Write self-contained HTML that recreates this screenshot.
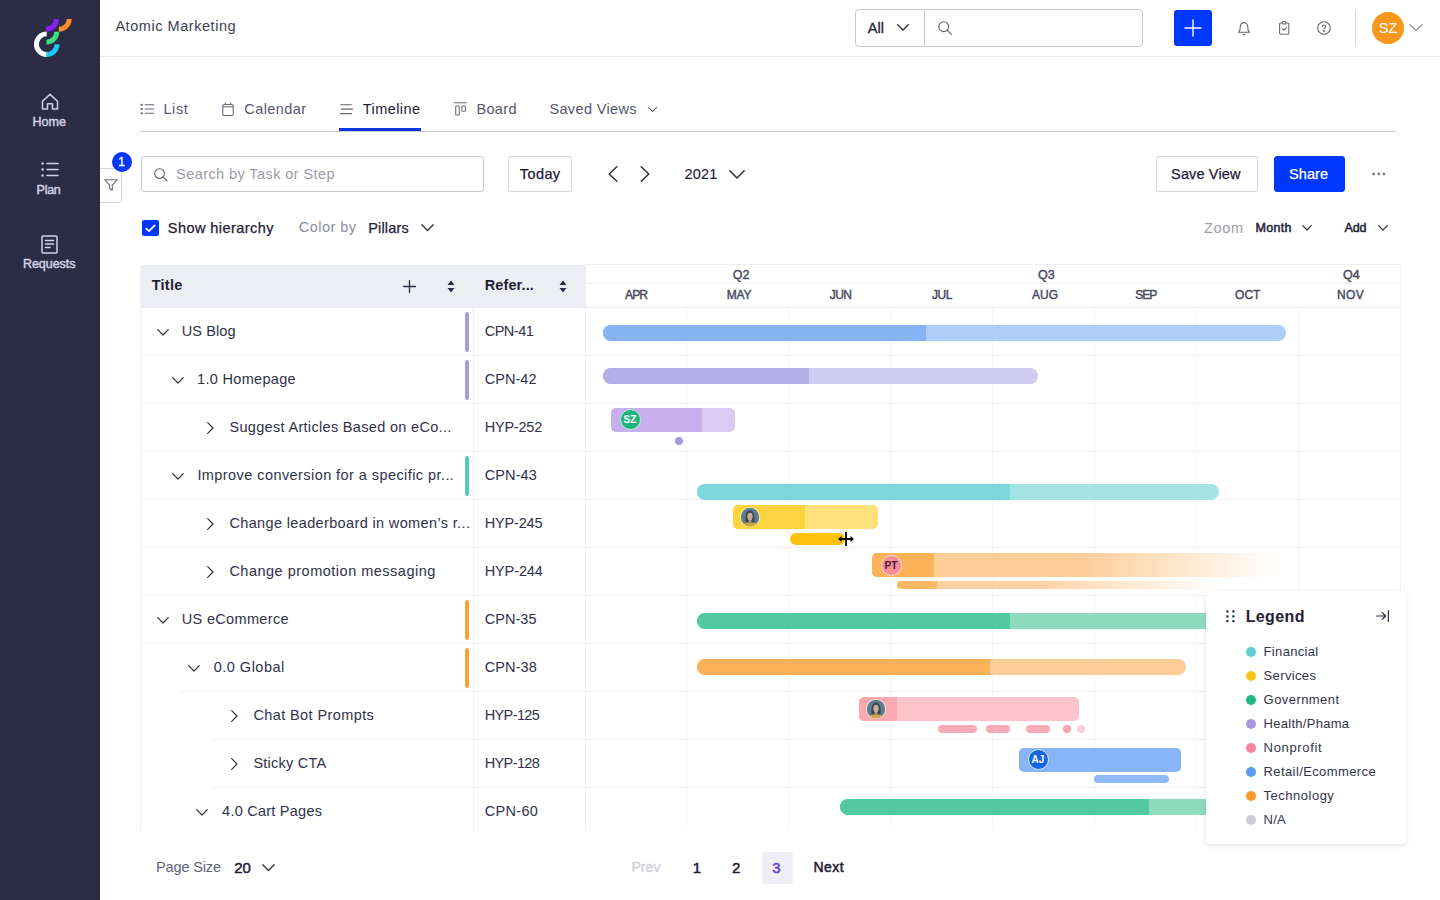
<!DOCTYPE html>
<html lang="en">
<head>
<meta charset="utf-8">
<title>Atomic Marketing - Timeline</title>
<style>
*{box-sizing:border-box;margin:0;padding:0}
html,body{width:1440px;height:900px;overflow:hidden;background:#fff}
body{font-family:"Liberation Sans",Arial,sans-serif;color:#1f2037;font-size:14px;position:relative}
.abs{position:absolute}
.t{position:absolute;white-space:nowrap;line-height:1}
svg{display:block;position:absolute;overflow:visible}
#side{position:absolute;left:0;top:0;width:100px;height:900px;background:#2c2c44}
#top{position:absolute;left:100px;top:0;width:1340px;height:57px;border-bottom:1px solid #ececf1;background:#fff}
#tabline{position:absolute;left:140px;top:131px;width:1256px;height:1px;background:#cbccd4}
#tabsel{position:absolute;left:338.500px;top:128px;width:82px;height:3px;background:#0c37e4}
.btn{position:absolute;height:36px;border:1px solid #d4d5dc;border-radius:3px;background:#fff}
#thead{position:absolute;left:140px;top:264.500px;width:445px;height:43px;background:#edeef4;border-radius:3px 0 0 0}
.hline{position:absolute;height:1px;background:#f0f0f4}
.vline{position:absolute;width:1px;background:#f6f6f9}
.pill{position:absolute;width:4px;height:40px;border-radius:2px;left:465px}
.bar{position:absolute;overflow:hidden}
.bar i{position:absolute;left:0;top:0;bottom:0;display:block}
.av{position:absolute;width:21px;height:21px;border-radius:50%;border:1.300px solid #fff;color:#fff;font-size:10px;font-weight:bold;line-height:19.500px;text-align:center}
#legend{position:absolute;left:1206px;top:591px;width:200px;height:253px;background:#fff;border-radius:4px;box-shadow:0 2px 5px rgba(40,40,70,.12),0 0 1px rgba(40,40,70,.09)}
.dot{position:absolute;width:10px;height:10px;border-radius:50%}
</style>
</head>
<body>

<div id="side">
<svg style="left:0;top:0" width="100" height="70" viewBox="0 0 100 70" fill="none" stroke-width="4.900"><path d="M46.700 33.9A10.3 10.3 0 0 0 46.700 54.5" stroke="#fff"/><path d="M46.7 54.5A10.3 10.3 0 0 0 57 44.2" stroke="#1cc8f0"/><path d="M46.5 42.1A10.3 10.3 0 0 0 56.8 31.8" stroke="#3be081"/><path d="M46.1 29.2A10.3 10.3 0 0 0 56.4 18.9" stroke="#8622f5"/><path d="M58.9 29.2A10.3 10.3 0 0 0 69.2 18.9" stroke="#ff8a2b"/></svg>
<svg style="left:41px;top:93px" width="18" height="18" viewBox="0 0 18 18" fill="none" stroke="#d2d2e6" stroke-width="1.500" stroke-linejoin="round" stroke-linecap="round"><path d="M1.500 8.200 9 1.400l7.500 6.800V16h-5v-5.200h-5V16h-5z"/></svg>
<svg style="left:41px;top:161px" width="18" height="17" viewBox="0 0 18 17" fill="none" stroke="#d2d2e6" stroke-width="1.500" stroke-linecap="round"><path d="M6 2.500h11M6 8.500h11M6 14.500h11"/><circle cx="1.600" cy="2.500" r="1.200" fill="#d2d2e6" stroke="none"/><circle cx="1.600" cy="8.500" r="1.200" fill="#d2d2e6" stroke="none"/><circle cx="1.600" cy="14.500" r="1.200" fill="#d2d2e6" stroke="none"/></svg>
<svg style="left:41px;top:235px" width="17" height="19" viewBox="0 0 17 19" fill="none" stroke="#d2d2e6" stroke-width="1.500" stroke-linejoin="round" stroke-linecap="round"><rect x="1" y="1" width="15" height="17" rx="1"/><path d="M4.500 5.500h8M4.500 9h8M4.500 12.500h4.500"/></svg>
<div class="t" style="left:32.4px;top:115.67px;font-size:12.5px;color:#d2d2e6;letter-spacing:0.09px;-webkit-text-stroke:0.45px #d2d2e6;">Home</div>
<div class="t" style="left:36.6px;top:183.68px;font-size:12.5px;color:#d2d2e6;letter-spacing:-0.28px;-webkit-text-stroke:0.45px #d2d2e6;">Plan</div>
<div class="t" style="left:22.9px;top:257.88px;font-size:12.5px;color:#d2d2e6;letter-spacing:-0.03px;-webkit-text-stroke:0.45px #d2d2e6;">Requests</div>
</div>
<div id="top"></div>
<div class="t" style="left:115.4px;top:18.89px;font-size:14.5px;color:#3d3e55;letter-spacing:0.55px;">Atomic Marketing</div>
<div class="abs" style="left:855px;top:9px;width:288px;height:38px;border:1px solid #c9cad2;border-radius:4px"></div>
<div class="abs" style="left:924px;top:10px;width:1px;height:36px;background:#c9cad2"></div>
<div class="t" style="left:867.8px;top:20.89px;font-size:14.5px;color:#1f2037;letter-spacing:0.04px;-webkit-text-stroke:0.3px #1f2037;">All</div>
<svg style="left:897px;top:24px" width="12" height="7" viewBox="0 0 12 7" fill="none" stroke="#2a2b40" stroke-width="1.300" stroke-linecap="round" stroke-linejoin="round"><path d="M.700.700 6 6 11.300.700"/></svg>
<svg style="left:938px;top:21px" width="14" height="14" viewBox="0 0 14 14" fill="none" stroke="#5d5e70" stroke-width="1.100" stroke-linecap="round"><circle cx="5.700" cy="5.700" r="4.900"/><path d="M9.300 9.300 13.300 13.300"/></svg>
<div class="abs" style="left:1174px;top:10px;width:38px;height:36px;background:#0037ff;border-radius:3px"></div>
<svg style="left:1185px;top:20px" width="16" height="16" viewBox="0 0 16 16" stroke="#fff" stroke-width="1.400" stroke-linecap="round"><path d="M8 0v16M0 8h16"/></svg>
<svg style="left:1238px;top:21.600px" width="12" height="13.500" viewBox="0 0 12 13.500" fill="none" stroke="#62636f" stroke-width="1.050" stroke-linecap="round" stroke-linejoin="round"><path d="M.600 10.200c1.200-.900 1.600-2 1.600-4.600C2.200 2.500 3.800.600 6 .600s3.800 1.900 3.800 5c0 2.600.400 3.700 1.600 4.600z"/><path d="M4.700 12.100c.300.500.800.700 1.300.7s1-.200 1.300-.7"/></svg>
<svg style="left:1278.900px;top:21.100px" width="10.400" height="13.800" viewBox="0 0 10.400 13.800" fill="none" stroke="#62636f" stroke-width="1.050" stroke-linecap="round" stroke-linejoin="round"><rect x=".600" y="2" width="9.200" height="11.200" rx="1"/><rect x="3.500" y=".500" width="3.400" height="2.400" rx=".700" fill="#fff"/><path d="M3.200 7.700l1.500 1.400 2.700-2.800"/></svg>
<svg style="left:1317px;top:20.900px" width="14" height="14" viewBox="0 0 14 14" fill="none" stroke="#62636f" stroke-width="1.050" stroke-linecap="round" stroke-linejoin="round"><circle cx="7" cy="7" r="6.350"/><path d="M5.200 5.600c0-1 .800-1.700 1.800-1.700s1.800.700 1.800 1.600c0 1.200-1.800 1.400-1.800 2.600"/><circle cx="7" cy="10" r=".450" fill="#62636f"/></svg>
<div class="abs" style="left:1355px;top:11px;width:1px;height:35px;background:#d9dae0"></div>
<div class="abs" style="left:1372px;top:12px;width:32px;height:32px;border-radius:50%;background:#f8981a"></div>
<div class="t" style="left:1378.73px;top:21.09px;font-size:14.5px;color:#fff;">SZ</div>
<svg style="left:1409px;top:24px" width="14" height="7" viewBox="0 0 14 7" fill="none" stroke="#8a8b9a" stroke-width="1.200" stroke-linecap="round" stroke-linejoin="round"><path d="M.700.600 7 6.300 13.300.600"/></svg>
<div id="tabline"></div><div id="tabsel"></div>
<div class="t" style="left:163.4px;top:101.69px;font-size:14.5px;color:#55566b;letter-spacing:0.64px;">List</div>
<div class="t" style="left:244.3px;top:101.69px;font-size:14.5px;color:#55566b;letter-spacing:0.42px;">Calendar</div>
<div class="t" style="left:362.7px;top:101.69px;font-size:14.5px;color:#1f2037;letter-spacing:0.45px;">Timeline</div>
<div class="t" style="left:476.4px;top:101.69px;font-size:14.5px;color:#55566b;letter-spacing:0.37px;">Board</div>
<div class="t" style="left:549.4px;top:101.69px;font-size:14.5px;color:#55566b;letter-spacing:0.36px;">Saved Views</div>
<svg style="left:140px;top:103px" width="15" height="12" viewBox="0 0 15 12" fill="none" stroke="#666778" stroke-width="1.100" stroke-linecap="round"><path d="M5.200 1.700h8.400M5.200 6h8.400M5.200 10.300h8.400"/><rect x=".700" y=".700" width="2.100" height="2.100" rx=".600" fill="#666778" stroke="none"/><rect x=".700" y="4.950" width="2.100" height="2.100" rx=".600" fill="#666778" stroke="none"/><rect x=".700" y="9.200" width="2.100" height="2.100" rx=".600" fill="#666778" stroke="none"/></svg>
<svg style="left:222.400px;top:102px" width="12" height="14" viewBox="0 0 12 14" fill="none" stroke="#666778" stroke-width="1.050" stroke-linecap="round" stroke-linejoin="round"><rect x=".800" y="2.400" width="10.400" height="11" rx="1.200"/><path d="M.800 4.800h10.400M3.300.700v1.700M8.700.700v1.700"/></svg>
<svg style="left:340px;top:104px" width="13" height="11" viewBox="0 0 13 11" fill="none" stroke="#666778" stroke-width="1.150" stroke-linecap="round"><path d="M.600.700h10.800M1.400 5.100h11.200M.600 9.600h10.800"/></svg>
<svg style="left:453px;top:101px" width="15" height="15" viewBox="0 0 15 15" fill="none" stroke="#666778" stroke-width="1.050" stroke-linecap="round" stroke-linejoin="round"><path d="M1.300 1.700h12.200"/><rect x="2.700" y="4.900" width="3.500" height="9.100" rx=".600"/><rect x="8.900" y="4.900" width="3.500" height="5.400" rx=".600"/></svg>
<svg style="left:648px;top:107px" width="9" height="5" viewBox="0 0 9 5" fill="none" stroke="#55566b" stroke-width="1.100" stroke-linecap="round" stroke-linejoin="round"><path d="M.600.600 4.500 4.300 8.400.600"/></svg>
<div class="abs" style="left:100px;top:168px;width:22px;height:35px;border:1px solid #d4d5dc;border-left:0;border-radius:0 3px 3px 0;background:#fff"></div>
<svg style="left:104px;top:179px" width="14" height="12" viewBox="0 0 14 12" fill="none" stroke="#6a6b7d" stroke-width="1.100" stroke-linejoin="round"><path d="M.800.700h12.400L8.300 6.300v4.900L5.700 9.700V6.300z"/></svg>
<div class="abs" style="left:111.500px;top:151.500px;width:20px;height:20px;border-radius:50%;background:#0037ff"></div>
<div class="t" style="left:118.3px;top:155.72px;font-size:12px;color:#fff;-webkit-text-stroke:0.35px #fff;">1</div>
<div class="abs" style="left:141px;top:156px;width:343px;height:36px;border:1px solid #c9cad2;border-radius:3px"></div>
<svg style="left:154px;top:168px" width="14" height="14" viewBox="0 0 14 14" fill="none" stroke="#62636f" stroke-width="1.100" stroke-linecap="round"><circle cx="5.600" cy="5.600" r="4.800"/><path d="M9.200 9.200 13 13"/></svg>
<div class="t" style="left:176.1px;top:166.9px;font-size:14.5px;color:#9b9ca8;letter-spacing:0.42px;">Search by Task or Step</div>
<div class="btn" style="left:508px;top:156px;width:64px"></div>
<div class="t" style="left:519.8px;top:167px;font-size:14.5px;color:#1f2037;letter-spacing:0.4px;-webkit-text-stroke:0.25px #1f2037;">Today</div>
<svg style="left:608px;top:166px" width="10" height="16" viewBox="0 0 10 16" fill="none" stroke="#2a2b40" stroke-width="1.500" stroke-linecap="round" stroke-linejoin="round"><path d="M8.800.800 1.200 8l7.600 7.200"/></svg>
<svg style="left:640px;top:166px" width="10" height="16" viewBox="0 0 10 16" fill="none" stroke="#2a2b40" stroke-width="1.500" stroke-linecap="round" stroke-linejoin="round"><path d="M1.200.800 8.800 8l-7.600 7.200"/></svg>
<div class="t" style="left:684.4px;top:167px;font-size:14.5px;color:#1f2037;letter-spacing:0.21px;-webkit-text-stroke:0.15px #1f2037;">2021</div>
<svg style="left:729px;top:170px" width="16" height="9" viewBox="0 0 16 9" fill="none" stroke="#2a2b40" stroke-width="1.500" stroke-linecap="round" stroke-linejoin="round"><path d="M.800.800 8 8l7.200-7.200"/></svg>
<div class="btn" style="left:1156px;top:156px;width:101.500px"></div>
<div class="t" style="left:1171.1px;top:166.7px;font-size:14.5px;color:#1f2037;letter-spacing:0.14px;-webkit-text-stroke:0.25px #1f2037;">Save View</div>
<div class="btn" style="left:1273.500px;top:156px;width:71px;background:#0037ff;border-color:#0037ff"></div>
<div class="t" style="left:1289px;top:166.7px;font-size:14.5px;color:#fff;letter-spacing:0.1px;-webkit-text-stroke:0.25px #fff;">Share</div>
<svg style="left:1372px;top:172px" width="14" height="4" viewBox="0 0 14 4"><circle cx="1.700" cy="2" r="1.400" fill="#7b7c8c"/><circle cx="6.800" cy="2" r="1.400" fill="#7b7c8c"/><circle cx="11.900" cy="2" r="1.400" fill="#7b7c8c"/></svg>
<div class="abs" style="left:142px;top:220px;width:17px;height:16px;border-radius:2px;background:#0037ff"></div>
<svg style="left:145px;top:224px" width="11" height="9" viewBox="0 0 11 9" fill="none" stroke="#fff" stroke-width="1.800" stroke-linecap="round" stroke-linejoin="round"><path d="M1.300 4.600 4 7.200 9.600 1.500"/></svg>
<div class="t" style="left:167.8px;top:220.7px;font-size:14.5px;color:#1f2037;letter-spacing:0.44px;-webkit-text-stroke:0.25px #1f2037;">Show hierarchy</div>
<div class="t" style="left:298.7px;top:220.09px;font-size:14.5px;color:#8d8e9b;letter-spacing:0.49px;">Color by</div>
<div class="t" style="left:368.2px;top:220.7px;font-size:14.5px;color:#1f2037;letter-spacing:0.17px;-webkit-text-stroke:0.25px #1f2037;">Pillars</div>
<svg style="left:421px;top:224px" width="13" height="8" viewBox="0 0 13 8" fill="none" stroke="#2a2b40" stroke-width="1.300" stroke-linecap="round" stroke-linejoin="round"><path d="M.800.800 6.500 6.500 12.200.800"/></svg>
<div class="t" style="left:1204px;top:220.59px;font-size:14.5px;color:#9b9ca8;letter-spacing:0.67px;">Zoom</div>
<div class="t" style="left:1255.4px;top:221.57px;font-size:12.5px;color:#1f2037;letter-spacing:0.36px;-webkit-text-stroke:0.5px #1f2037;">Month</div>
<svg style="left:1302px;top:225px" width="10" height="6" viewBox="0 0 10 6" fill="none" stroke="#2a2b40" stroke-width="1.200" stroke-linecap="round" stroke-linejoin="round"><path d="M.700.700 5 5 9.300.700"/></svg>
<div class="t" style="left:1344.6px;top:221.57px;font-size:12.5px;color:#1f2037;letter-spacing:-0.13px;-webkit-text-stroke:0.5px #1f2037;">Add</div>
<svg style="left:1378px;top:225px" width="10" height="6" viewBox="0 0 10 6" fill="none" stroke="#2a2b40" stroke-width="1.200" stroke-linecap="round" stroke-linejoin="round"><path d="M.700.700 5 5 9.300.700"/></svg>
<div id="thead"></div>
<div class="t" style="left:151.7px;top:278px;font-size:14.5px;color:#1f2037;font-weight:bold;letter-spacing:0.26px;">Title</div>
<svg style="left:403px;top:280px" width="13" height="13" viewBox="0 0 13 13" stroke="#2a2b40" stroke-width="1.300" stroke-linecap="round"><path d="M6.500.600v11.800M.600 6.500h11.800"/></svg>
<svg style="left:447px;top:280px" width="8" height="13" viewBox="0 0 8 13" fill="#2a2b40"><path d="M4 .500 7.500 5h-7zM4 12.500.500 8h7z"/></svg>
<div class="t" style="left:484.7px;top:278px;font-size:14.5px;color:#1f2037;font-weight:bold;letter-spacing:0.12px;">Refer...</div>
<svg style="left:559px;top:280px" width="8" height="13" viewBox="0 0 8 13" fill="#2a2b40"><path d="M4 .500 7.500 5h-7zM4 12.500.500 8h7z"/></svg>
<div class="hline" style="left:585px;top:264px;width:815px;background:#eeeef2"></div>
<div class="hline" style="left:585px;top:283px;width:815px;background:#f0f0f4"></div>
<div class="hline" style="left:585px;top:307px;width:815px;background:#eaeaef"></div>
<div class="t" style="left:625.05px;top:289.32px;font-size:12px;color:#4b4c5f;letter-spacing:-0.84px;-webkit-text-stroke:0.45px #4b4c5f;">APR</div>
<div class="t" style="left:726.65px;top:289.32px;font-size:12px;color:#4b4c5f;letter-spacing:-0.16px;-webkit-text-stroke:0.45px #4b4c5f;">MAY</div>
<div class="t" style="left:829.8px;top:289.32px;font-size:12px;color:#4b4c5f;letter-spacing:-0.62px;-webkit-text-stroke:0.45px #4b4c5f;">JUN</div>
<div class="t" style="left:932.1px;top:289.32px;font-size:12px;color:#4b4c5f;letter-spacing:-0.52px;-webkit-text-stroke:0.45px #4b4c5f;">JUL</div>
<div class="t" style="left:1032.1px;top:289.32px;font-size:12px;color:#4b4c5f;letter-spacing:-0.06px;-webkit-text-stroke:0.45px #4b4c5f;">AUG</div>
<div class="t" style="left:1135.35px;top:289.32px;font-size:12px;color:#4b4c5f;letter-spacing:-1.01px;-webkit-text-stroke:0.45px #4b4c5f;">SEP</div>
<div class="t" style="left:1235.1px;top:289.32px;font-size:12px;color:#4b4c5f;letter-spacing:-0.02px;-webkit-text-stroke:0.45px #4b4c5f;">OCT</div>
<div class="t" style="left:1337.05px;top:289.32px;font-size:12px;color:#4b4c5f;letter-spacing:0.29px;-webkit-text-stroke:0.45px #4b4c5f;">NOV</div>
<div class="t" style="left:732.66px;top:268.88px;font-size:12.5px;color:#4b4c5f;-webkit-text-stroke:0.45px #4b4c5f;">Q2</div>
<div class="t" style="left:1037.96px;top:268.88px;font-size:12.5px;color:#4b4c5f;-webkit-text-stroke:0.45px #4b4c5f;">Q3</div>
<div class="t" style="left:1342.96px;top:268.88px;font-size:12.5px;color:#4b4c5f;-webkit-text-stroke:0.45px #4b4c5f;">Q4</div>
<div class="vline" style="left:686.38px;top:308px;height:527px"></div>
<div class="vline" style="left:788.25px;top:308px;height:527px"></div>
<div class="vline" style="left:890.12px;top:308px;height:527px"></div>
<div class="vline" style="left:992px;top:308px;height:527px"></div>
<div class="vline" style="left:1093.88px;top:308px;height:527px"></div>
<div class="vline" style="left:1195.75px;top:308px;height:527px;background:#fafafc"></div>
<div class="vline" style="left:1297.62px;top:308px;height:527px"></div>
<div class="vline" style="left:585px;top:265px;height:570px;background:#efeff3"></div>
<div class="vline" style="left:1399.500px;top:265px;height:570px;background:#f1f1f5"></div>
<div class="vline" style="left:472.500px;top:308px;height:527px;background:#f0f0f4"></div>
<div class="vline" style="left:140px;top:308px;height:527px;background:#f0f0f4"></div>
<svg style="left:157px;top:329px" width="12" height="7" viewBox="0 0 12 7" fill="none" stroke="#30314a" stroke-width="1.200" stroke-linecap="round" stroke-linejoin="round"><path d="M.700.700 6 6 11.300.700"/></svg>
<div class="t" style="left:181.7px;top:324.19px;font-size:14.5px;color:#30314a;letter-spacing:0.12px;">US Blog</div>
<div class="t" style="left:484.7px;top:324.19px;font-size:14.5px;color:#30314a;letter-spacing:-0.48px;">CPN-41</div>
<div class="pill" style="top:312px;background:#a79bdc"></div>
<div class="hline" style="left:140px;top:355px;width:1260px"></div>
<svg style="left:172px;top:377px" width="12" height="7" viewBox="0 0 12 7" fill="none" stroke="#30314a" stroke-width="1.200" stroke-linecap="round" stroke-linejoin="round"><path d="M.700.700 6 6 11.300.700"/></svg>
<div class="t" style="left:197.1px;top:372.19px;font-size:14.5px;color:#30314a;letter-spacing:0.31px;">1.0 Homepage</div>
<div class="t" style="left:484.7px;top:372.19px;font-size:14.5px;color:#30314a;letter-spacing:0.06px;">CPN-42</div>
<div class="pill" style="top:360px;background:#a79bdc"></div>
<div class="hline" style="left:140px;top:403px;width:1260px"></div>
<svg style="left:206.5px;top:422px" width="7" height="12" viewBox="0 0 7 12" fill="none" stroke="#30314a" stroke-width="1.200" stroke-linecap="round" stroke-linejoin="round"><path d="M.700.700 6 6 .700 11.300"/></svg>
<div class="t" style="left:229.4px;top:420.19px;font-size:14.5px;color:#30314a;letter-spacing:0.32px;">Suggest Articles Based on eCo...</div>
<div class="t" style="left:484.7px;top:420.19px;font-size:14.5px;color:#30314a;letter-spacing:-0.21px;">HYP-252</div>
<div class="hline" style="left:140px;top:451px;width:1260px"></div>
<svg style="left:172px;top:473px" width="12" height="7" viewBox="0 0 12 7" fill="none" stroke="#30314a" stroke-width="1.200" stroke-linecap="round" stroke-linejoin="round"><path d="M.700.700 6 6 11.300.700"/></svg>
<div class="t" style="left:197.4px;top:468.19px;font-size:14.5px;color:#30314a;letter-spacing:0.43px;">Improve conversion for a specific pr...</div>
<div class="t" style="left:484.7px;top:468.19px;font-size:14.5px;color:#30314a;letter-spacing:0.12px;">CPN-43</div>
<div class="pill" style="top:456px;background:#55c9c3"></div>
<div class="hline" style="left:140px;top:499px;width:1260px"></div>
<svg style="left:206.5px;top:518px" width="7" height="12" viewBox="0 0 7 12" fill="none" stroke="#30314a" stroke-width="1.200" stroke-linecap="round" stroke-linejoin="round"><path d="M.700.700 6 6 .700 11.300"/></svg>
<div class="t" style="left:229.4px;top:516.19px;font-size:14.5px;color:#30314a;letter-spacing:0.36px;">Change leaderboard in women’s r...</div>
<div class="t" style="left:484.7px;top:516.19px;font-size:14.5px;color:#30314a;letter-spacing:-0.16px;">HYP-245</div>
<div class="hline" style="left:140px;top:547px;width:1260px"></div>
<svg style="left:206.5px;top:566px" width="7" height="12" viewBox="0 0 7 12" fill="none" stroke="#30314a" stroke-width="1.200" stroke-linecap="round" stroke-linejoin="round"><path d="M.700.700 6 6 .700 11.300"/></svg>
<div class="t" style="left:229.4px;top:564.19px;font-size:14.5px;color:#30314a;letter-spacing:0.5px;">Change promotion messaging</div>
<div class="t" style="left:484.7px;top:564.19px;font-size:14.5px;color:#30314a;letter-spacing:-0.11px;">HYP-244</div>
<div class="hline" style="left:140px;top:595px;width:1260px"></div>
<svg style="left:157px;top:617px" width="12" height="7" viewBox="0 0 12 7" fill="none" stroke="#30314a" stroke-width="1.200" stroke-linecap="round" stroke-linejoin="round"><path d="M.700.700 6 6 11.300.700"/></svg>
<div class="t" style="left:181.7px;top:612.19px;font-size:14.5px;color:#30314a;letter-spacing:0.34px;">US eCommerce</div>
<div class="t" style="left:484.7px;top:612.19px;font-size:14.5px;color:#30314a;letter-spacing:0.06px;">CPN-35</div>
<div class="pill" style="top:600px;background:#f2a33a"></div>
<div class="hline" style="left:140px;top:643px;width:1260px"></div>
<svg style="left:188px;top:665px" width="12" height="7" viewBox="0 0 12 7" fill="none" stroke="#30314a" stroke-width="1.200" stroke-linecap="round" stroke-linejoin="round"><path d="M.700.700 6 6 11.300.700"/></svg>
<div class="t" style="left:213.7px;top:660.19px;font-size:14.5px;color:#30314a;letter-spacing:0.5px;">0.0 Global</div>
<div class="t" style="left:484.7px;top:660.19px;font-size:14.5px;color:#30314a;letter-spacing:0.12px;">CPN-38</div>
<div class="pill" style="top:648px;background:#f2a33a"></div>
<div class="hline" style="left:180px;top:691px;width:1220px"></div>
<svg style="left:230.5px;top:710px" width="7" height="12" viewBox="0 0 7 12" fill="none" stroke="#30314a" stroke-width="1.200" stroke-linecap="round" stroke-linejoin="round"><path d="M.700.700 6 6 .700 11.300"/></svg>
<div class="t" style="left:253.4px;top:708.19px;font-size:14.5px;color:#30314a;letter-spacing:0.4px;">Chat Bot Prompts</div>
<div class="t" style="left:484.7px;top:708.19px;font-size:14.5px;color:#30314a;letter-spacing:-0.61px;">HYP-125</div>
<div class="hline" style="left:212px;top:739px;width:1188px"></div>
<svg style="left:230.5px;top:758px" width="7" height="12" viewBox="0 0 7 12" fill="none" stroke="#30314a" stroke-width="1.200" stroke-linecap="round" stroke-linejoin="round"><path d="M.700.700 6 6 .700 11.300"/></svg>
<div class="t" style="left:253.4px;top:756.19px;font-size:14.5px;color:#30314a;letter-spacing:0.25px;">Sticky CTA</div>
<div class="t" style="left:484.7px;top:756.19px;font-size:14.5px;color:#30314a;letter-spacing:-0.61px;">HYP-128</div>
<div class="hline" style="left:212px;top:787px;width:1188px"></div>
<svg style="left:196px;top:809px" width="12" height="7" viewBox="0 0 12 7" fill="none" stroke="#30314a" stroke-width="1.200" stroke-linecap="round" stroke-linejoin="round"><path d="M.700.700 6 6 11.300.700"/></svg>
<div class="t" style="left:222.1px;top:804.19px;font-size:14.5px;color:#30314a;letter-spacing:0.24px;">4.0 Cart Pages</div>
<div class="t" style="left:484.7px;top:804.19px;font-size:14.5px;color:#30314a;letter-spacing:0.32px;">CPN-60</div>
<div class="bar" style="left:603px;top:325px;width:683px;height:16px;border-radius:8px;background:#aecdf9;"><i style="width:323px;background:#85b3f5"></i></div>
<div class="bar" style="left:603px;top:368px;width:435px;height:16px;border-radius:8px;background:#cfcbf1;"><i style="width:205.8px;background:#b4aee9"></i></div>
<div class="bar" style="left:611px;top:408px;width:124px;height:24px;border-radius:5px;background:#dccaf2;"><i style="width:91px;background:#c8aeec"></i></div>
<div class="av" style="left:619.500px;top:409.300px;background:#1fb57a;border-color:#b4f5dd">SZ</div>
<div class="abs" style="left:675px;top:437px;width:8px;height:8px;border-radius:50%;background:#a898de"></div>
<div class="bar" style="left:697px;top:484px;width:522px;height:16px;border-radius:8px;background:#a5e4e5;"><i style="width:313px;background:#7cd8dc"></i></div>
<div class="bar" style="left:733px;top:505px;width:145px;height:24px;border-radius:5px;background:#fee17a;"><i style="width:72px;background:#fdd340"></i></div>
<div class="bar" style="left:790px;top:533px;width:55px;height:12px;border-radius:6px;background:#fcc310;"></div>
<div class="bar" style="left:872px;top:553px;width:420px;height:24px;border-radius:5px;background:linear-gradient(90deg,#fdcc97 0,#fdcc97 48%,#fff 97%);"><i style="width:62px;background:#fbb259"></i></div>
<div class="bar" style="left:897px;top:581px;width:333px;height:8px;border-radius:4px;background:linear-gradient(90deg,#fdd0a0 0,#fdd0a0 40%,#fff 97%);"><i style="width:40px;background:#fbb866"></i></div>
<div class="av" style="left:880.500px;top:554.500px;background:#f78d96;border-color:#ffdcdc;color:#3a1a2a">PT</div>
<div class="bar" style="left:697px;top:613px;width:533px;height:16px;border-radius:8px;background:#8edbc0;border-radius:8px 0 0 8px;"><i style="width:313px;background:#52c9a1"></i></div>
<div class="bar" style="left:697px;top:659px;width:489px;height:16px;border-radius:8px;background:#fdcc97;"><i style="width:293px;background:#fbb259"></i></div>
<div class="bar" style="left:859px;top:697px;width:220px;height:24px;border-radius:5px;background:#fdc4cb;"><i style="width:38px;background:#fba9b1"></i></div>
<div class="bar" style="left:938px;top:725px;width:39px;height:8px;border-radius:4px;background:#f7abb8;"></div>
<div class="bar" style="left:986px;top:725px;width:24px;height:8px;border-radius:4px;background:#f7abb8;"></div>
<div class="bar" style="left:1026px;top:725px;width:24px;height:8px;border-radius:4px;background:#f7abb8;"></div>
<div class="abs" style="left:1063px;top:725px;width:8px;height:8px;border-radius:50%;background:#f4a3b4"></div>
<div class="abs" style="left:1076.500px;top:725px;width:8px;height:8px;border-radius:50%;background:#fbd0da"></div>
<div class="bar" style="left:1019px;top:748px;width:162px;height:24px;border-radius:5px;background:#88b5fa;"></div>
<div class="bar" style="left:1094px;top:775px;width:75px;height:8px;border-radius:4px;background:#8fb9f8;"></div>
<div class="av" style="left:1027.500px;top:749px;background:#1565e0;border-color:#e4eeff">AJ</div>
<div class="bar" style="left:840px;top:799px;width:390px;height:16px;border-radius:8px;background:#8edbc0;border-radius:8px 0 0 8px;"><i style="width:309px;background:#52c9a1"></i></div>
<svg style="left:739.8px;top:507px" width="20" height="20" viewBox="0 0 20 20"><defs><clipPath id="c749"><circle cx="10" cy="10" r="9.200"/></clipPath></defs><circle cx="10" cy="10" r="10" fill="#fff0b0"/><g clip-path="url(#c749)"><rect width="20" height="20" fill="#5b7d8d"/><ellipse cx="10" cy="19.500" rx="7" ry="4.800" fill="#c9a93c"/><path d="M5.600 15.500C5 11 5.500 3.600 10 3.600s5 7.400 4.400 11.900z" fill="#3f474d"/><rect x="8.700" y="12" width="2.600" height="3.600" fill="#b59a8c"/><ellipse cx="10" cy="9.400" rx="2.700" ry="3.700" fill="#c6ad9f"/></g></svg>
<svg style="left:865.8px;top:698.8px" width="20" height="20" viewBox="0 0 20 20"><defs><clipPath id="c875"><circle cx="10" cy="10" r="9.200"/></clipPath></defs><circle cx="10" cy="10" r="10" fill="#ffe6ea"/><g clip-path="url(#c875)"><rect width="20" height="20" fill="#5b7d8d"/><ellipse cx="10" cy="19.500" rx="7" ry="4.800" fill="#c9a93c"/><path d="M5.600 15.500C5 11 5.500 3.600 10 3.600s5 7.400 4.400 11.900z" fill="#3f474d"/><rect x="8.700" y="12" width="2.600" height="3.600" fill="#b59a8c"/><ellipse cx="10" cy="9.400" rx="2.700" ry="3.700" fill="#c6ad9f"/></g></svg>
<svg style="left:838px;top:531px" width="16" height="16" viewBox="0 0 16 16"><path d="M8 1v14M1.500 8h13" stroke="#000" stroke-width="1.800" fill="none"/><path d="M0 8l3.500-3v6zM16 8l-3.500-3v6z" fill="#000"/></svg>
<div class="abs" style="left:136px;top:827px;width:1070px;height:9px;background:linear-gradient(180deg,rgba(255,255,255,0),#fff 85%)"></div>
<div id="legend"></div>
<svg style="left:1225.500px;top:609.800px" width="9" height="13" viewBox="0 0 9 13" fill="#2a2b40"><rect x="0.3" y="0.3" width="2.200" height="2.200" rx=".500"/><rect x="0.3" y="5.2" width="2.200" height="2.200" rx=".500"/><rect x="0.3" y="10.1" width="2.200" height="2.200" rx=".500"/><rect x="6.3" y="0.3" width="2.200" height="2.200" rx=".500"/><rect x="6.3" y="5.2" width="2.200" height="2.200" rx=".500"/><rect x="6.3" y="10.1" width="2.200" height="2.200" rx=".500"/></svg>
<div class="t" style="left:1245.7px;top:608.76px;font-size:16px;color:#1f2037;font-weight:bold;letter-spacing:0.38px;">Legend</div>
<svg style="left:1375.500px;top:610px" width="13" height="12" viewBox="0 0 13 12" fill="none" stroke="#2a2b40" stroke-width="1.200" stroke-linecap="round" stroke-linejoin="round"><path d="M.700 6h8.800M6.200 2.600 9.600 6 6.200 9.400M12.400.600v10.800"/></svg>
<div class="dot" style="left:1246px;top:646.9px;background:#5ed0d4"></div>
<div class="t" style="left:1263.6px;top:645.03px;font-size:13px;color:#33344a;letter-spacing:0.33px;">Financial</div>
<div class="dot" style="left:1246px;top:670.9px;background:#fcc419"></div>
<div class="t" style="left:1263.6px;top:669.03px;font-size:13px;color:#33344a;letter-spacing:0.36px;">Services</div>
<div class="dot" style="left:1246px;top:694.9px;background:#21b780"></div>
<div class="t" style="left:1263.6px;top:693.03px;font-size:13px;color:#33344a;letter-spacing:0.43px;">Government</div>
<div class="dot" style="left:1246px;top:718.9px;background:#a898e4"></div>
<div class="t" style="left:1263.6px;top:717.03px;font-size:13px;color:#33344a;letter-spacing:0.28px;">Health/Phama</div>
<div class="dot" style="left:1246px;top:742.9px;background:#f5839b"></div>
<div class="t" style="left:1263.6px;top:741.03px;font-size:13px;color:#33344a;letter-spacing:0.66px;">Nonprofit</div>
<div class="dot" style="left:1246px;top:766.9px;background:#5e9af0"></div>
<div class="t" style="left:1263.6px;top:765.03px;font-size:13px;color:#33344a;letter-spacing:0.39px;">Retail/Ecommerce</div>
<div class="dot" style="left:1246px;top:790.9px;background:#f7982a"></div>
<div class="t" style="left:1263.6px;top:789.03px;font-size:13px;color:#33344a;letter-spacing:0.5px;">Technology</div>
<div class="dot" style="left:1246px;top:814.9px;background:#cdced4"></div>
<div class="t" style="left:1263.6px;top:813.03px;font-size:13px;color:#33344a;letter-spacing:0.16px;">N/A</div>
<div class="t" style="left:156.1px;top:860.1px;font-size:14.5px;color:#62637a;letter-spacing:-0.15px;">Page Size</div>
<div class="t" style="left:234.16px;top:859.85px;font-size:15px;color:#1f2037;-webkit-text-stroke:0.5px #1f2037;">20</div>
<svg style="left:262px;top:864px" width="13" height="8" viewBox="0 0 13 8" fill="none" stroke="#2a2b40" stroke-width="1.300" stroke-linecap="round" stroke-linejoin="round"><path d="M.800.800 6.500 6.500 12.200.800"/></svg>
<div class="t" style="left:631.4px;top:860.44px;font-size:14px;color:#d3d4db;letter-spacing:0.1px;-webkit-text-stroke:0.5px #d3d4db;">Prev</div>
<div class="t" style="left:692.8px;top:859.95px;font-size:15px;color:#1f2037;-webkit-text-stroke:0.5px #1f2037;">1</div>
<div class="t" style="left:731.9px;top:859.95px;font-size:15px;color:#1f2037;-webkit-text-stroke:0.5px #1f2037;">2</div>
<div class="abs" style="left:762px;top:852px;width:31px;height:31.500px;background:#eeeef4;border-radius:2px"></div>
<div class="t" style="left:772.2px;top:859.95px;font-size:15px;color:#6b3fcf;-webkit-text-stroke:0.5px #6b3fcf;">3</div>
<div class="t" style="left:813.4px;top:860.44px;font-size:14px;color:#1f2037;letter-spacing:0.47px;-webkit-text-stroke:0.5px #1f2037;">Next</div>

</body>
</html>
